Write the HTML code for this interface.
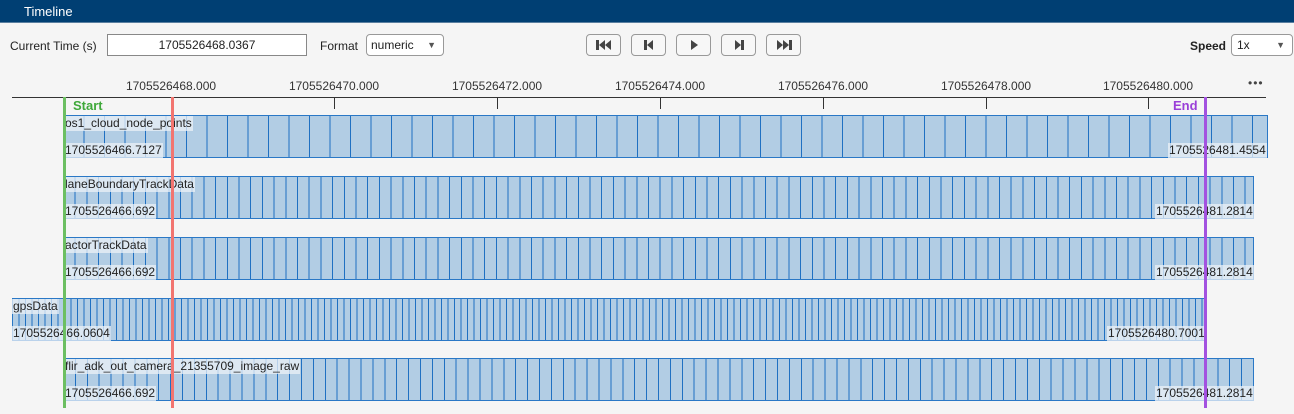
<!DOCTYPE html><html><head><meta charset="utf-8"><style>
*{box-sizing:border-box;margin:0;padding:0}
body{width:1294px;height:414px;background:#f5f5f5;font-family:"Liberation Sans",sans-serif;font-size:12px;color:#222;position:relative;overflow:hidden}
.a{position:absolute}
.hdr{left:0;top:0;width:1294px;height:23px;background:#003f73;border-bottom:1px solid #5a7fa0}
.hdr span{position:absolute;left:24px;top:4px;color:#fff;font-size:13px}
.lbl{font-size:12px;color:#222}
.btn{width:35px;height:22px;border:1px solid #999;border-radius:4px;background:#f7f7f7;top:34px}
.btn svg{position:absolute;left:8px;top:4px}
.tick{width:1px;height:12px;background:#333;top:97px}
.tl{top:79px;font-size:12px;color:#333;width:120px;text-align:center}
.row{border:1px solid #2a78c6;background-color:#b2cde4;height:43px}
.tag{background:rgba(235,240,247,.75);font-size:12px;color:#222;padding:0 1px;line-height:15px}
</style></head><body>
<div class="a hdr"><span>Timeline</span></div>
<div class="a lbl" style="left:10px;top:39px">Current Time (s)</div>
<div class="a" style="left:107px;top:34px;width:200px;height:22px;border:1px solid #888;background:#fff;text-align:center;line-height:20px">1705526468.0367</div>
<div class="a lbl" style="left:320px;top:39px">Format</div>
<div class="a" style="left:366px;top:34px;width:78px;height:22px;border:1px solid #999;border-radius:4px;background:#fff;padding-left:4px;line-height:20px">numeric<span style="position:absolute;right:7px;top:0;font-size:9px;color:#555">▼</span></div>
<div class="a btn" style="left:586px"><svg width="18" height="12" viewBox="0 0 18 12"><rect x="1" y="1" width="3" height="10" fill="#444"/><path d="M10 1L4 6L10 11Z M16 1L10 6L16 11Z" fill="#444"/></svg></div>
<div class="a btn" style="left:631px"><svg width="18" height="12" viewBox="0 0 18 12"><rect x="4" y="1" width="3" height="10" fill="#444"/><path d="M13 1L7 6L13 11Z" fill="#444"/></svg></div>
<div class="a btn" style="left:676px"><svg width="18" height="12" viewBox="0 0 18 12"><path d="M6 1L13 6L6 11Z" fill="#444"/></svg></div>
<div class="a btn" style="left:721px"><svg width="18" height="12" viewBox="0 0 18 12"><path d="M5 1L11 6L5 11Z" fill="#444"/><rect x="11" y="1" width="3" height="10" fill="#444"/></svg></div>
<div class="a btn" style="left:766px"><svg width="18" height="12" viewBox="0 0 18 12"><path d="M2 1L8 6L2 11Z M8 1L14 6L8 11Z" fill="#444"/><rect x="14" y="1" width="3" height="10" fill="#444"/></svg></div>
<div class="a lbl" style="left:1190px;top:39px;font-weight:bold">Speed</div>
<div class="a" style="left:1231px;top:34px;width:62px;height:22px;border:1px solid #999;border-radius:4px;background:#fff;padding-left:5px;line-height:20px">1x<span style="position:absolute;right:7px;top:0;font-size:9px;color:#555">▼</span></div>
<div class="a tl" style="left:111px">1705526468.000</div>
<div class="a tl" style="left:274px">1705526470.000</div>
<div class="a tl" style="left:437px">1705526472.000</div>
<div class="a tl" style="left:600px">1705526474.000</div>
<div class="a tl" style="left:763px">1705526476.000</div>
<div class="a tl" style="left:926px">1705526478.000</div>
<div class="a tl" style="left:1088px">1705526480.000</div>
<div class="a" style="left:1248px;top:76px;font-size:12px;color:#444;letter-spacing:1px">•••</div>
<div class="a" style="left:12px;top:97px;width:1254px;height:1px;background:#333"></div>
<div class="a tick" style="left:171px"></div><div class="a tick" style="left:334px"></div><div class="a tick" style="left:497px"></div><div class="a tick" style="left:660px"></div><div class="a tick" style="left:823px"></div><div class="a tick" style="left:986px"></div><div class="a tick" style="left:1148px"></div>

<div class="a row" style="left:63px;top:115px;width:1205px;background-image:repeating-linear-gradient(90deg,transparent 0 19.5px,#1f70c2 19.5px 20.5px)"></div>
<div class="a row" style="left:63px;top:176px;width:1191px;background-image:repeating-linear-gradient(90deg,transparent 0 10.7px,#1f70c2 10.7px 11.7px)"></div>
<div class="a row" style="left:63px;top:237px;width:1191px;background-image:repeating-linear-gradient(90deg,transparent 0 10.7px,#1f70c2 10.7px 11.7px)"></div>
<div class="a row" style="left:12px;top:298px;width:1194px;background-image:repeating-linear-gradient(90deg,transparent 0 5.5px,#1f70c2 5.5px 6.5px)"></div>
<div class="a row" style="left:63px;top:358px;width:1191px;background-image:repeating-linear-gradient(90deg,transparent 0 10.9px,#1f70c2 10.9px 11.9px)"></div>

<div class="a tag" style="left:64px;top:116px">os1_cloud_node_points</div>
<div class="a tag" style="left:64px;top:143px">1705526466.7127</div>
<div class="a tag" style="left:1168px;top:143px">1705526481.4554</div>
<div class="a tag" style="left:64px;top:177px">laneBoundaryTrackData</div>
<div class="a tag" style="left:64px;top:204px">1705526466.692</div>
<div class="a tag" style="left:1155px;top:204px">1705526481.2814</div>
<div class="a tag" style="left:64px;top:238px">actorTrackData</div>
<div class="a tag" style="left:64px;top:265px">1705526466.692</div>
<div class="a tag" style="left:1155px;top:265px">1705526481.2814</div>
<div class="a tag" style="left:12px;top:299px">gpsData</div>
<div class="a tag" style="left:12px;top:326px">1705526466.0604</div>
<div class="a tag" style="left:1107px;top:326px">1705526480.7001</div>
<div class="a tag" style="left:64px;top:359px">flir_adk_out_camera_21355709_image_raw</div>
<div class="a tag" style="left:64px;top:386px">1705526466.692</div>
<div class="a tag" style="left:1155px;top:386px">1705526481.2814</div>

<div class="a" style="left:63px;top:97px;width:3px;height:311px;background:#6cbf62"></div>
<div class="a" style="left:73px;top:98px;font-weight:bold;color:#3fa83a;font-size:13px">Start</div>
<div class="a" style="left:171px;top:97px;width:3px;height:311px;background:#f27570"></div>
<div class="a" style="left:1204px;top:97px;width:3px;height:311px;background:#a352e0"></div>
<div class="a" style="left:1173px;top:98px;font-weight:bold;color:#9a3fd8;font-size:13px">End</div>
</body></html>
